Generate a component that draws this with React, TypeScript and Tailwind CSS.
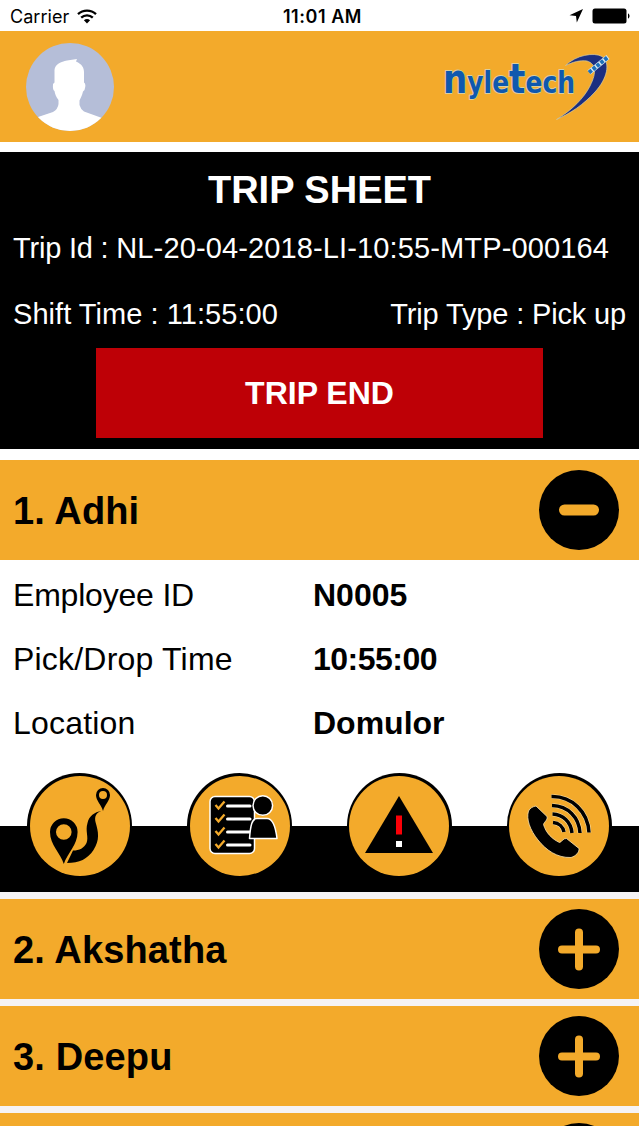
import { useState } from 'react';

type Employee = {
  title: string;
  id?: string;
  time?: string;
  location?: string;
};

const employees: Employee[] = [
  { title: '1. Adhi', id: 'N0005', time: '10:55:00', location: 'Domulor' },
  { title: '2. Akshatha' },
  { title: '3. Deepu' },
  { title: '' },
];

function StatusBar() {
  return (
    <div className="grid h-[31px] shrink-0 grid-cols-3 items-center bg-white pt-px pr-[9px] pl-[10px] font-['Inter',sans-serif] text-[18px] text-black">
      <div className="flex items-center gap-2">
        <span className="pt-px tracking-[0.05px]">Carrier</span>
        <svg width="20" height="15" viewBox="0 0 20 15" fill="none" stroke="#000" strokeWidth="2.3">
          <path d="M1 5.2a13 13 0 0 1 18 0" />
          <path d="M4.2 8.6a8.4 8.4 0 0 1 11.6 0" />
          <path d="M10 14.4 6.9 11.3a4.6 4.6 0 0 1 6.2 0z" fill="#000" stroke="none" />
        </svg>
      </div>
      <div className="pt-px pl-[5px] text-center text-[18px] font-semibold tracking-[0.55px] whitespace-nowrap">
        11:01 AM
      </div>
      <div className="flex items-center justify-end gap-[9px]">
        <svg width="14" height="14" viewBox="0 0 14 14">
          <path d="M14 0 0.5 6.2 7 7 7.8 13.5z" fill="#000" />
        </svg>
        <svg width="38" height="16" viewBox="0 0 38 16">
          <rect x="0.5" y="0.5" width="34" height="15" rx="2.5" />
          <path d="M36 5.5c2 .6 2 4.400 0 5z" />
        </svg>
      </div>
    </div>
  );
}

function Avatar() {
  return (
    <svg width="88" height="88" viewBox="0 0 88 88">
      <defs>
        <clipPath id="avatar">
          <circle cx="44" cy="44" r="44" />
        </clipPath>
      </defs>
      <g clipPath="url(#avatar)">
        <rect width="88" height="88" fill="#b5bed8" />
        <path
          d="M28.500 27C29 21 35 19 41 17.500L51 16 50 18.500C56 21 58 25 58 29V39.500Q60.500 41 58.500 47L57 48.500C56 53 54.500 55 53.500 57.500V62Q54.500 66 58 68.500L76 75 70 88H15L12 74 27 69Q32 66 32.500 61V57C30 54 29 51 28.500 48Q26.500 47 27 41L28.500 39.500Z"
          fill="#fff"
        />
      </g>
    </svg>
  );
}

function Logo() {
  return (
    <svg width="170" height="72" viewBox="442 50 170 72">
      <text
        x="443"
        y="92"
        fontSize="30"
        textLength="132"
        lengthAdjust="spacingAndGlyphs"
        fill="#0f58ae"
        stroke="#d9cfa0"
        strokeWidth="1.800"
        paintOrder="stroke"
        strokeLinejoin="round"
        className="font-['DejaVu_Sans',sans-serif] font-bold"
      >
        <tspan fontSize="41">n</tspan>yle<tspan fontSize="41">t</tspan>ech
      </text>
      <path
        d="M565.500 64.500C576 54 594 51 602 55.500 611 62 607 78 595 91 583 104 571 112 556.500 118.500 572 109 584 97 590 85 597 71 596 63 587 60 580 59 573 61 565.500 64.500Z"
        fill="#1c2f80"
        stroke="#d9cfa0"
        strokeWidth="0.7"
      />
      <path d="M589 71.500 608 56" stroke="#d6e6ee" strokeWidth="5" />
      <path d="M589 71.500 608 56" stroke="#1d70ba" strokeWidth="4" strokeDasharray="3.500 1.500" />
    </svg>
  );
}

function RouteIcon() {
  return (
    <svg viewBox="0 0 105 105" className="h-full w-full">
      <path
        fillRule="evenodd"
        d="M36.800 91C33.500 80 23 72 23 59a13.800 13.800 0 0 1 27.600 0C50.500 72 40.500 80 36.800 91ZM36.800 51.200a7.800 7.800 0 1 0 0 15.600 7.800 7.800 0 0 0 0-15.600Z"
      />
      <path
        fillRule="evenodd"
        d="M76 38C74.200 31 69 28 69 22a7 7 0 0 1 14 0C83 28 77.800 31 76 38ZM76 18a4 4 0 1 0 0 8 4 4 0 0 0 0-8Z"
      />
      <path d="M74.500 38C68.500 40 67.500 44 68.500 49 71.500 59 73 67 66.500 77 60.500 86 52.500 90 40 90L46 77.500C52.500 77.500 57 75 59.500 70 62 64 58 58 60.500 50 62 43 67.500 39 74.500 38Z" />
    </svg>
  );
}

function ChecklistIcon() {
  return (
    <svg viewBox="0 0 105 105" className="h-full w-full" fill="none">
      <rect x="23" y="23.500" width="44.500" height="57" rx="5" fill="#000" stroke="#fff" strokeWidth="1.500" />
      {[32, 45, 58, 71].map((y) => (
        <g key={y}>
          <path d={`M28.500 ${y}l3 3.500 6-7`} stroke="#f3aa2b" strokeWidth="2.300" />
          <path d={`M40.500 ${y + 1}h22.500`} stroke="#fff" strokeWidth="3" strokeLinecap="round" />
        </g>
      ))}
      <path
        d="M62.500 65.500C63.500 52 65 45.500 70 45.500H80C86 45.500 88.500 53 90 65.500Z"
        fill="#000"
        stroke="#fff"
        strokeWidth="1.500"
        strokeLinejoin="round"
      />
      <circle cx="75.800" cy="32.500" r="9.800" fill="#000" stroke="#fff" strokeWidth="1.500" />
    </svg>
  );
}

function AlertIcon() {
  return (
    <svg viewBox="0 0 105 105" className="h-full w-full">
      <path d="M52 23 86 80H18Z" />
      <path d="M49 42.500h6v19h-6z" fill="#fb0007" />
      <path d="M49 68h6v6h-6z" fill="#fff" />
    </svg>
  );
}

function CallIcon() {
  return (
    <svg viewBox="0 0 105 105" className="h-full w-full">
      <path
        d="M21.500 38C23 35 26 33.500 29 33L40 43.500C41 47 37 49 36.500 51.500 39 60 45 66 52.500 69.500 55 69 56 65 59.500 65.500L72 75.500C72.500 79 69 83 64 84.500 50 85 39 77 31 67 23 57 19 46 21.500 38Z"
        stroke="#fbe3ae"
        strokeWidth="0.8"
        strokeLinejoin="round"
      />
      <g fill="none" stroke="#fbe3ae" strokeWidth="4.600">
        <path d="M44.500 23.500C65 23 81 39 82 59.500" />
        <path d="M45 32.500C61 33 72 44 73 60" />
        <path d="M45.500 41C56 41.500 64 49 65 60" />
        <path d="M46 49.500C52 50 56 54 57 59" />
      </g>
      <g fill="none" stroke="#000" strokeWidth="3.500">
        <path d="M44.500 23.500C65 23 81 39 82 59.500" />
        <path d="M45 32.500C61 33 72 44 73 60" />
        <path d="M45.500 41C56 41.500 64 49 65 60" />
        <path d="M46 49.500C52 50 56 54 57 59" />
      </g>
    </svg>
  );
}

function Actions() {
  const icons = [RouteIcon, ChecklistIcon, AlertIcon, CallIcon];
  return (
    <div className="mt-[71px] flex h-[66px] bg-black">
      <div className="-mt-[53px] grid w-full grid-cols-4 items-start justify-items-center">
        {icons.map((Icon, i) => (
          <button key={i} className="flex h-[105px] w-[105px] rounded-full bg-black p-[2.500px]">
            <span className="block h-full w-full rounded-full bg-[#f3aa2b]">
              <span className="-m-[2.500px] block h-[105px] w-[105px]">
                <Icon />
              </span>
            </span>
          </button>
        ))}
      </div>
    </div>
  );
}

export default function App() {
  const [open, setOpen] = useState(0);

  return (
    <div className="flex h-[1136px] w-[639px] flex-col overflow-hidden bg-white font-['Liberation_Sans',Arial,sans-serif] text-black">
      <StatusBar />

      {/* header */}
      <header className="flex h-[111px] shrink-0 items-center justify-between bg-[#f3aa2b] pr-[27px] pl-[26px]">
        <Avatar />
        <Logo />
      </header>

      {/* trip summary */}
      <section className="mt-[10px] flex h-[297px] shrink-0 flex-col bg-black text-[29px] text-white">
        <h1 className="flex h-[75px] items-center justify-center pt-[2px] text-[38px] font-bold">TRIP SHEET</h1>
        <p className="flex h-[42px] items-center px-[13px] pt-[2px] whitespace-pre">
          <span className="tracking-[-0.2px]">Trip Id : </span>
          <span className="tracking-[0.13px]">NL-20-04-2018-LI-10:55-MTP-000164</span>
        </p>
        <div className="mt-[11px] flex h-[66px] items-center justify-between px-[13px] pt-[3px]">
          <span className="tracking-[0.05px]">Shift Time : 11:55:00</span>
          <span className="tracking-[-0.15px]">Trip Type : Pick up</span>
        </div>
        <button className="mx-24 mt-0.5 h-[90px] bg-[#be0006] text-[32px] font-bold">TRIP END</button>
      </section>

      {/* employees */}
      <main className="mt-[11px] flex h-[666px] shrink-0 flex-col overflow-hidden">
        {employees.map((employee, i) => (
          <div key={i} className="shrink-0 border-b-[7px] border-[#f5f3f5]">
            <div className="flex h-[100px] items-center justify-between bg-[#f3aa2b] pr-5 pl-[13px]">
              <h2 className="pt-[3px] text-[38px] font-bold tracking-[0.15px]">{employee.title}</h2>
              <button onClick={() => setOpen(open === i ? -1 : i)}>
                <svg width="80" height="80" viewBox="0 0 80 80" stroke="#f3aa2b" strokeLinecap="round">
                  <circle cx="40" cy="40" r="40" stroke="none" />
                  {open === i ? (
                    <path d="M25.500 40h29" strokeWidth="11" />
                  ) : (
                    <path d="M23 40.500h34M40 23.500v34" strokeWidth="8" />
                  )}
                </svg>
              </button>
            </div>
            {open === i && (
              <div className="bg-white pt-[3px] text-[32px]">
                <div className="flex h-16 items-center px-[13px]">
                  <span className="w-[300px] tracking-[-0.2px]">Employee ID</span>
                  <span className="font-bold">{employee.id}</span>
                </div>
                <div className="flex h-16 items-center px-[13px]">
                  <span className="w-[300px] tracking-[0.2px]">Pick/Drop Time</span>
                  <span className="font-bold tracking-[-0.5px]">{employee.time}</span>
                </div>
                <div className="flex h-16 items-center px-[13px]">
                  <span className="w-[300px] tracking-[0.2px]">Location</span>
                  <span className="font-bold">{employee.location}</span>
                </div>
                <Actions />
              </div>
            )}
          </div>
        ))}
      </main>
    </div>
  );
}
